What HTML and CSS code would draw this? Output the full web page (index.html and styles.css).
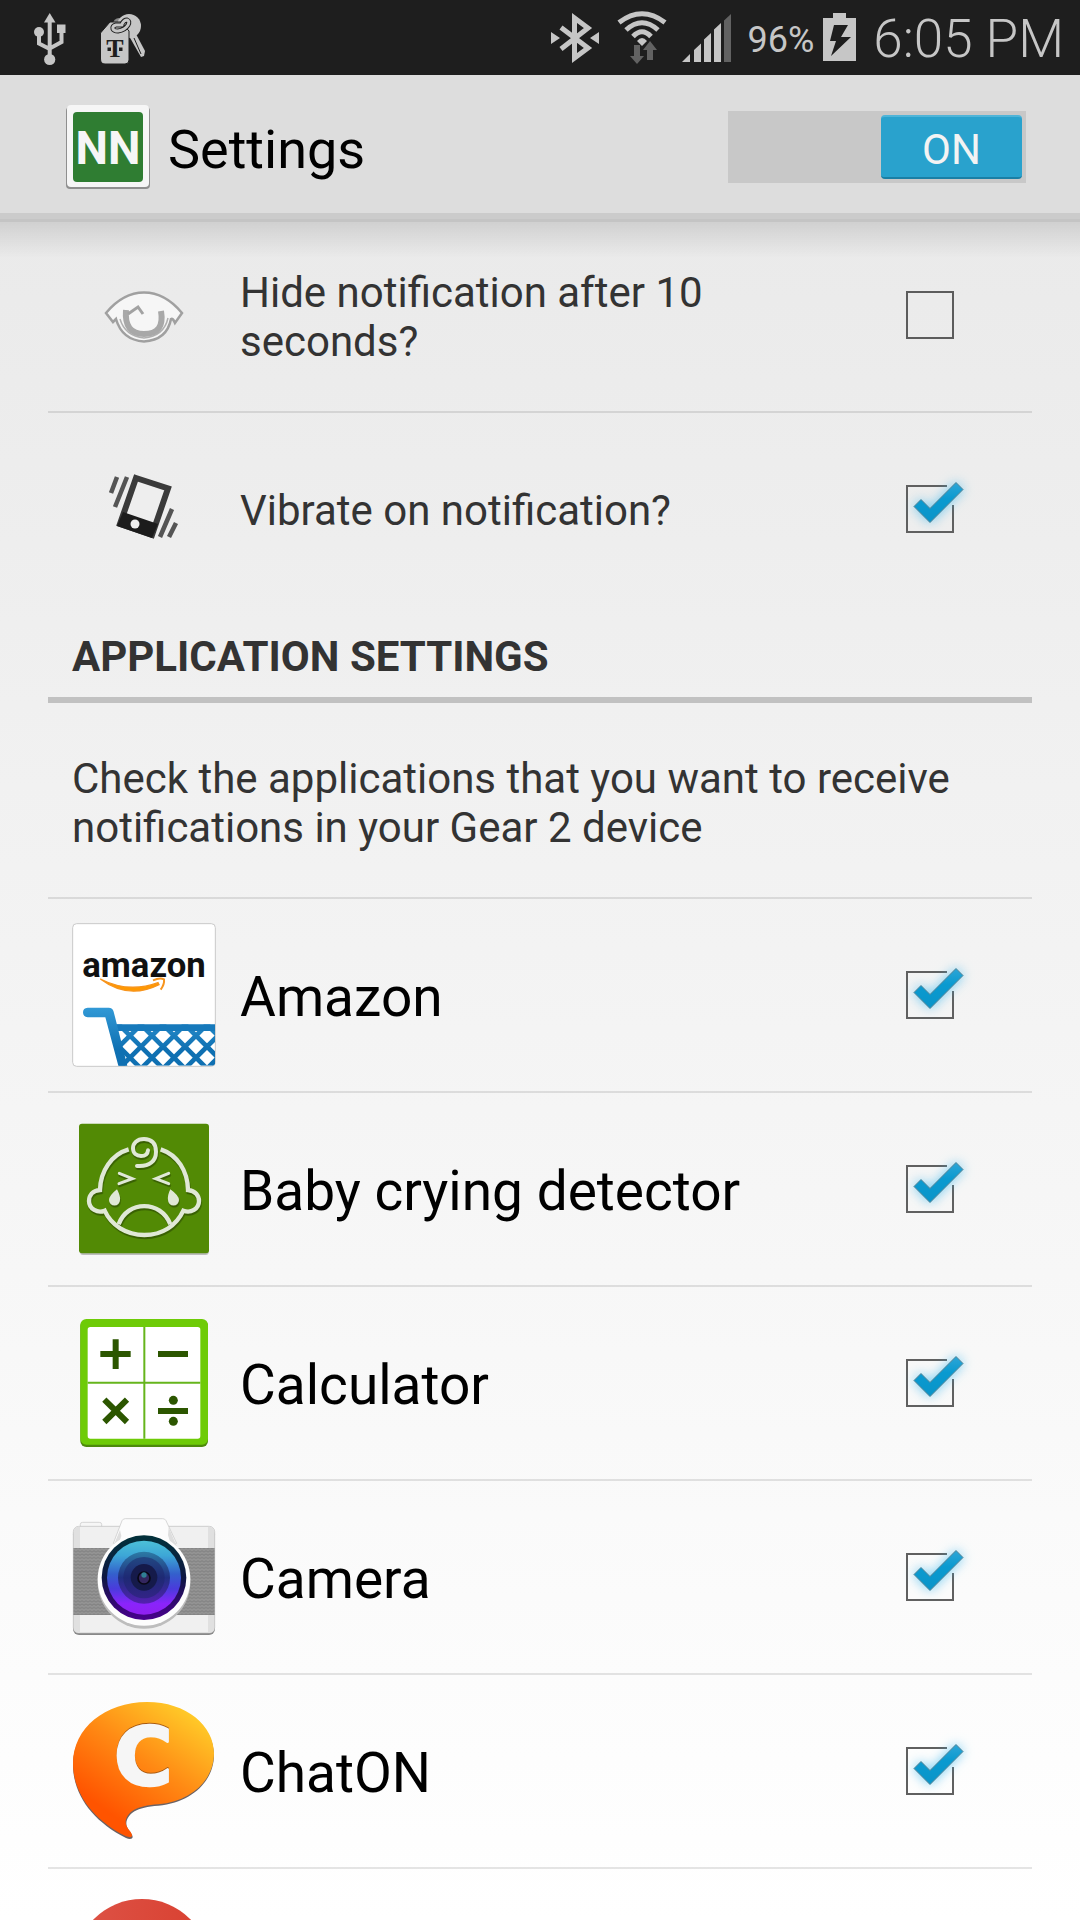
FILE: index.html
```
<!DOCTYPE html>
<html lang="en">
<head>
    <meta charset="UTF-8">
    <meta name="viewport" content="width=device-width, initial-scale=1.0">
    <title>Settings</title>
    <link rel="stylesheet" href="styles.css">
</head>
<body>

<!-- shared tick, used by every checked row -->
<svg class="defs" aria-hidden="true">
    <defs>
        <linearGradient id="tickFill" x1="0" y1="0" x2="0" y2="1">
            <stop offset="0" stop-color="#2ea5d6"/>
            <stop offset=".4" stop-color="#0a9ad0"/>
            <stop offset="1" stop-color="#0a94c8"/>
        </linearGradient>
        <symbol id="tick" viewBox="0 0 48 48" overflow="visible">
            <path d="M8 21.500L15 14.500L24 23.500L50 -2.500L57 4.500L24 37.500Z" fill="url(#tickFill)" stroke="#4f8093" stroke-width="1"/>
        </symbol>
        <symbol id="box" viewBox="0 0 48 48">
            <path d="M41 1H1V47H47V20" fill="none" stroke="#606060" stroke-width="2"/>
        </symbol>
    </defs>
</svg>

<div class="status-bar">
    <div class="status-left">
        <svg width="32" height="75" viewBox="34 0 32 75" fill="#c6c6c6">
            <path d="M49.700 13L55.500 22.500H44Z"/>
            <path d="M49.700 20V56M39 32V43.500L49.700 49M61.500 30V42L49.700 48.500" fill="none" stroke="#c6c6c6" stroke-width="4"/>
            <circle cx="39" cy="32" r="5"/>
            <rect x="57" y="24.500" width="8.500" height="8.500"/>
            <circle cx="49.700" cy="59.500" r="5.600"/>
        </svg>
        <svg width="46" height="75" viewBox="100 0 46 75">
            <circle cx="119" cy="24" r="6" fill="#888"/>
            <circle cx="129" cy="26" r="12" fill="#c6c6c6"/>
            <path d="M129 36L136 34L145 51L144 56L141 57Z" fill="#c6c6c6"/>
            <path d="M134 38L141 54" stroke="#1e1e1e" stroke-width="1"/>
            <path d="M100.500 33L110 22H121L129 31V60Q129 64 125 64H105Q100.500 64 100.500 59Z" fill="#c6c6c6" stroke="#1e1e1e" stroke-width="1"/>
            <path d="M122 25H116Q112 26 113 29Q114 31 118 31Q125 30 128 25Q130 21 127 20Q124 20 122 24" fill="none" stroke="#1e1e1e" stroke-width="5" stroke-linecap="round"/>
            <path d="M122 25H116Q112 26 113 29Q114 31 118 31Q125 30 128 25Q130 21 127 20Q124 20 122 24" fill="none" stroke="#c6c6c6" stroke-width="3" stroke-linecap="round"/>
            <text class="tag-text" x="115" y="57" text-anchor="middle">T</text>
            <path d="M107.500 47.500H111V51H107.500ZM119 47.500H122.500V51H119Z" fill="#1e1e1e"/>
        </svg>
    </div>
    <div class="status-right">
        <svg width="50" height="75" viewBox="548 0 50 75">
            <path d="M558 27.500L585 48L571.500 58V18L585 28L558 49" fill="none" stroke="#c6c6c6" stroke-width="5"/>
            <path d="M548 32V44L557 38ZM596 32V44L587 38Z" fill="#c6c6c6"/>
        </svg>
        <svg width="50" height="75" viewBox="616 0 50 75">
            <path d="M618 22.500Q641 5 664 22.500M625 30Q641 15.500 657 30M632 36.500Q641 27 650 36.500" fill="none" stroke="#c6c6c6" stroke-width="5"/>
            <path d="M636 41Q641 35 646 41L641 46Z" fill="#c6c6c6"/>
            <path d="M633 45H639V56H643L636 64L629 56H633ZM646 60V50H642L649 41L656 50H652V60Z" fill="#626262"/>
        </svg>
        <svg width="48" height="75" viewBox="681 0 48 75" overflow="visible" fill="#c6c6c6">
            <path d="M680 62L688 54V62ZM692 62V50L699 43.500V62ZM702 62V39.500L709 33V62ZM712 62V29.500L719 23V62Z"/>
            <path d="M722 62V20.500L729 14V62Z" fill="#626262"/>
        </svg>
        <div class="battery">
            <span>96%</span>
            <svg width="34" height="75" viewBox="821 0 34 75">
                <path d="M831 18V13H844V18H854V61H821V18Z" fill="#c6c6c6"/>
                <path d="M832 25H846L839 37H849L829 56L834 41H828Z" fill="#1e1e1e"/>
            </svg>
        </div>
        <time>6:05 PM</time>
    </div>
</div>

<header class="app-bar">
    <svg class="logo" viewBox="0 0 84 84">
        <rect x="0" y="2" width="84" height="82" rx="4" fill="#8f8f8f"/>
        <rect x="1" y="0" width="82" height="82" rx="4" fill="#f6f6f6"/>
        <rect x="7" y="7" width="70" height="70" rx="4" fill="#2f7d32"/>
        <text class="logo-text" x="42" y="59" text-anchor="middle">NN</text>
    </svg>
    <h1>Settings</h1>
    <button class="switch" type="button" role="switch" aria-checked="true" aria-label="Notifications">
        <span class="thumb">ON</span>
    </button>
</header>

<main>
    <ul class="list">
        <li>
            <label class="row">
                <svg class="icon" viewBox="0 0 144 144">
                    <path d="M34 70Q51 49.500 72 49.500T110 70L103 80Q101 75 99 76Q95 97 72 98.500Q50 97 44 76L41 79Z" fill="#f6f6f6" stroke="#a0a0a0" stroke-width="2.500"/>
                    <path d="M48 76Q53 93 72 95Q92 93 96 75" fill="none" stroke="#b0b0b0" stroke-width="1.500"/>
                    <path d="M54 67Q52 91 72 91Q93 91 89 68" fill="none" stroke="#a8a8a8" stroke-width="6"/>
                    <path d="M56 71L66 64L71 71" fill="none" stroke="#a2a2a2" stroke-width="3"/>
                </svg>
                <span class="option">Hide notification after 10 seconds?</span>
                <span class="check"><input type="checkbox"></span>
            </label>
        </li>
        <li>
            <label class="row">
                <svg class="icon" viewBox="0 0 144 144">
                    <path d="M64 41L96 51.500L80 98L48 87Z" fill="#eee" stroke="#3a3a3a" stroke-width="6"/>
                    <path d="M51 75L86 87L80 101L45 89Z" fill="#1c1c1c"/>
                    <circle cx="63" cy="87" r="4.500" fill="#eee"/>
                    <path d="M45 40L39 56M55 40L43 70M100 72L88 100M104 86L97 100" fill="none" stroke="#555" stroke-width="4.500"/>
                </svg>
                <span class="option">Vibrate on notification?</span>
                <span class="check"><input type="checkbox" checked><svg><use href="#box"/><use class="glow" href="#tick"/></svg></span>
            </label>
        </li>
    </ul>

    <h2>APPLICATION SETTINGS</h2>
    <p class="hint">Check the applications that you want to receive notifications in your Gear 2 device</p>

    <ul class="list apps">
        <li>
            <label class="row">
                <svg class="icon" viewBox="66 69 432 432">
                    <defs>
                        <linearGradient id="cart" gradientUnits="userSpaceOnUse" x1="0" y1="323" x2="0" y2="450">
                            <stop offset="0" stop-color="#3199d6"/>
                            <stop offset="1" stop-color="#0f70b2"/>
                        </linearGradient>
                        <clipPath id="basket"><path d="M200 373H495V497H205Z"/></clipPath>
                    </defs>
                    <rect x="68" y="71" width="428" height="428" rx="12" fill="#fff" stroke="#c9c9c9" stroke-width="3"/>
                    <text class="amazon-text" x="282" y="231" text-anchor="middle">amazon</text>
                    <path d="M151 237Q235 300 327 254L324 248Q235 280 151 237Z" fill="#f90" stroke="#f7941d" stroke-width="4"/>
                    <path d="M309 241Q330 232 342 238Q344 252 332 269" fill="none" stroke="#f7941d" stroke-width="6"/>
                    <g clip-path="url(#basket)" fill="none" stroke="url(#cart)">
                        <path stroke-width="14" d="M134 367L274 507M200 367L340 507M266 367L406 507M332 367L472 507M398 367L538 507M464 367L604 507
                            M280 367L140 507M346 367L206 507M412 367L272 507M478 367L338 507M544 367L404 507M610 367L470 507"/>
                    </g>
                    <path d="M198 373H495V393H203Z" fill="#1679bb"/>
                    <path d="M113 323H176Q188 323 191 335L232 497H205L166 352H113Q99 350 99 337T113 323Z" fill="url(#cart)"/>
                </svg>
                <span class="name">Amazon</span>
                <span class="check"><input type="checkbox" checked><svg><use href="#box"/><use class="glow" href="#tick"/></svg></span>
            </label>
        </li>
        <li>
            <label class="row">
                <svg class="icon" viewBox="66 51 432 432">
                    <rect x="90" y="80" width="386" height="385" rx="9" fill="#bdbdbd"/>
                    <rect x="87" y="71" width="390" height="389" rx="9" fill="#528a05"/>
                    <g class="baby-shadow">
                        <path d="M236 148C185 163 151 213 150 270C127 272 117 287 117 303C117 327 143 341 164 332C184 376 229 405 283 405C337 405 379 377 400 332C422 341 447 327 447 303C447 287 436 272 414 270C413 213 383 165 332 148" fill="none" stroke="#e0e8d6" stroke-width="13"/>
                        <path d="M206 373C232 300 333 300 361 373" fill="none" stroke="#e0e8d6" stroke-width="13"/>
                        <path d="M261 198C300 201 318 182 318 155C318 128 303 117 282 117C260 117 249 131 249 145C249 160 260 168 273 168C286 168 293 161 294 151" fill="none" stroke="#e0e8d6" stroke-width="12" stroke-linecap="round"/>
                        <path d="M208 220L247 236L207 251M356 220L317 236L356 251" fill="none" stroke="#e0e8d6" stroke-width="9" stroke-linecap="round"/>
                        <path d="M201 268Q212 288 210 300A16 16 0 0 1 177 300Q178 286 201 268ZM361 268Q386 286 387 300A16 16 0 0 1 354 300Q352 286 361 268Z" fill="#e0e8d6"/>
                    </g>
                </svg>
                <span class="name">Baby crying detector</span>
                <span class="check"><input type="checkbox" checked><svg><use href="#box"/><use class="glow" href="#tick"/></svg></span>
            </label>
        </li>
        <li>
            <label class="row">
                <svg class="icon" viewBox="66 63 432 432">
                    <rect x="91" y="90" width="383" height="381" rx="18" fill="#4d8a0b"/>
                    <rect x="91" y="87" width="383" height="377" rx="18" fill="#6ecb07"/>
                    <rect x="113" y="111" width="338" height="335" rx="8" fill="#fff"/>
                    <path d="M283 111V446M113 278H451" stroke="#66b51c" stroke-width="6"/>
                    <path d="M151 192H242M197 148V237M324 192H414M324 363H414M163 329L231 396M231 329L163 396" stroke="#2c5600" stroke-width="18"/>
                    <circle cx="370" cy="331" r="13.500" fill="#2c5600"/>
                    <circle cx="370" cy="394" r="13.500" fill="#2c5600"/>
                </svg>
                <span class="name">Calculator</span>
                <span class="check"><input type="checkbox" checked><svg><use href="#box"/><use class="glow" href="#tick"/></svg></span>
            </label>
        </li>
        <li>
            <label class="row">
                <svg class="icon" viewBox="66 45 432 432">
                    <defs>
                        <linearGradient id="lens" x1="0" y1="0" x2="0" y2="1">
                            <stop offset="0" stop-color="#4cc0d8"/>
                            <stop offset=".2" stop-color="#3da7d6"/>
                            <stop offset=".45" stop-color="#3460cc"/>
                            <stop offset=".65" stop-color="#4a3bdc"/>
                            <stop offset=".85" stop-color="#8a24fb"/>
                            <stop offset="1" stop-color="#8f20f0"/>
                        </linearGradient>
                        <linearGradient id="rim" x1="0" y1="0" x2="0" y2="1">
                            <stop offset="0" stop-color="#02313a"/>
                            <stop offset=".5" stop-color="#0e1742"/>
                            <stop offset="1" stop-color="#49008e"/>
                        </linearGradient>
                        <linearGradient id="inner" x1="0" y1="0" x2="0" y2="1">
                            <stop offset="0" stop-color="#2c7ba5"/>
                            <stop offset=".5" stop-color="#202f80"/>
                            <stop offset="1" stop-color="#5420b0"/>
                        </linearGradient>
                        <pattern id="grip" width="12" height="10" patternUnits="userSpaceOnUse">
                            <rect width="12" height="10" fill="#949494"/>
                            <path d="M0 2L6 6L12 2" fill="none" stroke="#808080" stroke-width="3"/>
                        </pattern>
                    </defs>
                    <path d="M91 112V103Q91 97 98 97H148Q155 97 155 103V112" fill="#f6f6f6" stroke="#c4c4c4" stroke-width="2"/>
                    <rect x="69" y="115" width="426" height="320" rx="18" fill="#888"/>
                    <rect x="70" y="109" width="424" height="320" rx="16" fill="#f0f0f0" stroke="#bbb" stroke-width="2"/>
                    <path d="M90 110V428H86Q71 428 71 412V126Q71 110 86 110ZM474 110V428H478Q493 428 493 412V126Q493 110 478 110Z" fill="#e0e0e0"/>
                    <rect x="70" y="174" width="424" height="201" fill="url(#grip)"/>
                    <circle cx="282" cy="277" r="139" fill="#bdbdbd"/>
                    <path d="M190 160L216 92Q219 86 226 86H338Q345 86 348 92L380 160Z" fill="#fcfcfc" stroke="#c4c4c4" stroke-width="2"/>
                    <path d="M190 168L210 120L214 138L200 180ZM380 168L356 112L354 136L368 180Z" fill="#dedede"/>
                    <circle cx="282" cy="268" r="139" fill="#fdfdfd"/>
                    <circle cx="282" cy="263" r="127" fill="url(#rim)"/>
                    <circle cx="282" cy="263" r="111" fill="url(#lens)"/>
                    <circle cx="282" cy="263" r="78" fill="url(#inner)"/>
                    <circle cx="282" cy="263" r="62" fill="#1c2468" opacity=".5"/>
                    <circle cx="282" cy="262" r="40" fill="#151a4a"/>
                    <circle cx="282" cy="264" r="18" fill="#33265e" stroke="#080814" stroke-width="5"/>
                    <circle cx="282" cy="255" r="8" fill="#2f7f94"/>
                </svg>
                <span class="name">Camera</span>
                <span class="check"><input type="checkbox" checked><svg><use href="#box"/><use class="glow" href="#tick"/></svg></span>
            </label>
        </li>
        <li>
            <label class="row">
                <svg class="icon" viewBox="66 57 432 432">
                    <defs>
                        <linearGradient id="bubble" x1=".85" y1=".1" x2=".3" y2=".85">
                            <stop offset="0" stop-color="#ffc928"/>
                            <stop offset=".5" stop-color="#ff8a14"/>
                            <stop offset="1" stop-color="#ff5400"/>
                        </linearGradient>
                    </defs>
                    <path d="M291 71C410 71 492 142 492 224C492 300 430 367 325 377C260 381 232 400 229 430C229 448 246 458 248 470C248 478 238 478 228 474C130 425 69 345 69 255C69 150 165 71 291 71Z" fill="#6b6264"/>
                    <path d="M291 66C410 66 492 137 492 220C492 296 430 363 325 373C260 377 230 396 227 426C227 446 246 454 246 466C246 474 236 472 228 469C130 420 69 340 69 250C69 145 165 66 291 66Z" fill="url(#bubble)"/>
                    <text class="chat-shadow" x="280" y="312" text-anchor="middle">C</text>
                    <text class="chat-text" x="280" y="314" text-anchor="middle">C</text>
                </svg>
                <span class="name">ChatON</span>
                <span class="check"><input type="checkbox" checked><svg><use href="#box"/><use class="glow" href="#tick"/></svg></span>
            </label>
        </li>
        <li>
            <label class="row">
                <svg class="icon" viewBox="0 0 144 144">
                    <defs>
                        <linearGradient id="red">
                            <stop offset="0" stop-color="#dd5347"/>
                            <stop offset="1" stop-color="#d94030"/>
                        </linearGradient>
                    </defs>
                    <circle cx="70" cy="74" r="68" fill="url(#red)"/>
                </svg>
                <span class="name"></span>
                <span class="check"><input type="checkbox" aria-label="Application" checked><svg><use href="#box"/><use class="glow" href="#tick"/></svg></span>
            </label>
        </li>
    </ul>
</main>

</body>
</html>
```
FILE: styles.css
```
* {
    box-sizing: border-box;
}

body {
    margin: 0;
    height: 100vh;
    display: flex;
    flex-direction: column;
    overflow: hidden;
    font-family: Roboto, sans-serif;
    color: #333;
}

.defs {
    position: absolute;
    width: 0;
    height: 0;
}

/* status bar */
.status-bar {
    display: flex;
    justify-content: space-between;
    flex: none;
    height: 75px;
    padding: 0 16px 0 34px;
    background-color: #1e1e1e;
    color: #c6c6c6;
}

.status-left {
    display: flex;
    gap: 34px;
}

.status-right {
    display: flex;
    align-items: center;
    gap: 16px;
}

.battery {
    display: flex;
    align-items: center;
    gap: 9px;
    font-size: 36px;
}

.battery span {
    padding-top: 4px;
}

time {
    padding-top: 2px;
    font-size: 53px;
    font-weight: 300;
}

.tag-text {
    font: bold 26px "Liberation Serif", serif;
    fill: #1e1e1e;
}

/* app bar */
.app-bar {
    position: relative;
    z-index: 1;
    display: flex;
    align-items: center;
    flex: none;
    height: 144px;
    padding: 0 54px 0 66px;
    background-color: #ddd;
    border-bottom: 6px solid #cbcbcb;
}

/* shadow falling on the list */
.app-bar::after {
    content: "";
    position: absolute;
    top: 100%;
    left: 0;
    right: 0;
    height: 36px;
    margin-top: 6px;
    border-top: 3px solid #c4c4c4;
    background: linear-gradient(rgba(0, 0, 0, 0.11), rgba(0, 0, 0, 0));
}

.logo {
    width: 84px;
    height: 84px;
    margin-top: 6px;
}

.logo-text {
    font: bold 46px Roboto, sans-serif;
    fill: #f6f6f6;
}

h1 {
    flex: 1;
    margin: 0 0 0 18px;
    padding-top: 10px;
    font-size: 54px;
    font-weight: 400;
    color: #000;
}

.switch {
    display: flex;
    justify-content: flex-end;
    width: 298px;
    height: 72px;
    margin-top: 6px;
    padding: 4px;
    border: none;
    background-color: #c8c8c8;
    font-family: inherit;
}

.thumb {
    width: 141px;
    height: 64px;
    padding-top: 3px;
    border-radius: 4px;
    border-top: 2px solid #4fb4d8;
    border-bottom: 2px solid #1a7fa5;
    background-color: #29a2cd;
    color: #f3f3f3;
    font-size: 42px;
    line-height: 60px;
    text-align: center;
}

/* list */
main {
    flex: 1;
    min-height: 0;
    overflow: hidden;
    padding: 0 48px;
    background: linear-gradient(#eaeaea, #fff);
}

.list {
    list-style: none;
    margin: 0;
    padding: 0;
}

.list li + li,
.apps {
    border-top: 2px solid rgba(0, 0, 0, 0.1);
}

.row {
    display: flex;
    align-items: center;
    gap: 24px;
    min-height: 192px;
    padding: 0 78px 0 24px;
}

.icon {
    flex: none;
    width: 144px;
    height: 144px;
}

.option,
.name {
    flex: 1;
    padding-top: 3px;
    padding-right: 60px;
}

.option {
    font-size: 42px;
    line-height: 49px;
}

.name {
    font-size: 55px;
    color: #000;
}

h2 {
    margin: 0;
    padding: 27px 24px 16px;
    border-bottom: 6px solid #c1c1c1;
    font-size: 42px;
    line-height: 49px;
}

.hint {
    margin: 0;
    padding: 51px 24px 45px;
    font-size: 42px;
    line-height: 49px;
}

/* checkboxes */
.check {
    position: relative;
    flex: none;
    width: 48px;
    height: 48px;
}

.check input {
    appearance: none;
    display: block;
    width: 48px;
    height: 48px;
    margin: 0;
    border: 2px solid #5c5c5c;
}

.check input:checked {
    border-color: transparent;
}

.check svg {
    display: none;
    position: absolute;
    top: 0;
    left: 0;
    width: 48px;
    height: 48px;
    overflow: visible;
    pointer-events: none;
}

.check input:checked + svg {
    display: block;
}

.glow {
    filter: drop-shadow(0 0 6px rgba(60, 185, 240, 0.7));
}

/* lettering inside the app icons */
.amazon-text {
    font: bold 104px Roboto, sans-serif;
    fill: #111;
}

.chat-text,
.chat-shadow {
    font: bold 240px "DejaVu Sans", sans-serif;
    fill: #f6f6f6;
    stroke: #f6f6f6;
    stroke-width: 8px;
    stroke-linejoin: round;
}

.chat-shadow {
    fill: #a85a10;
    stroke: #a85a10;
}

.baby-shadow {
    filter: drop-shadow(2px 6px 1px rgba(0, 0, 0, 0.3));
}
```
